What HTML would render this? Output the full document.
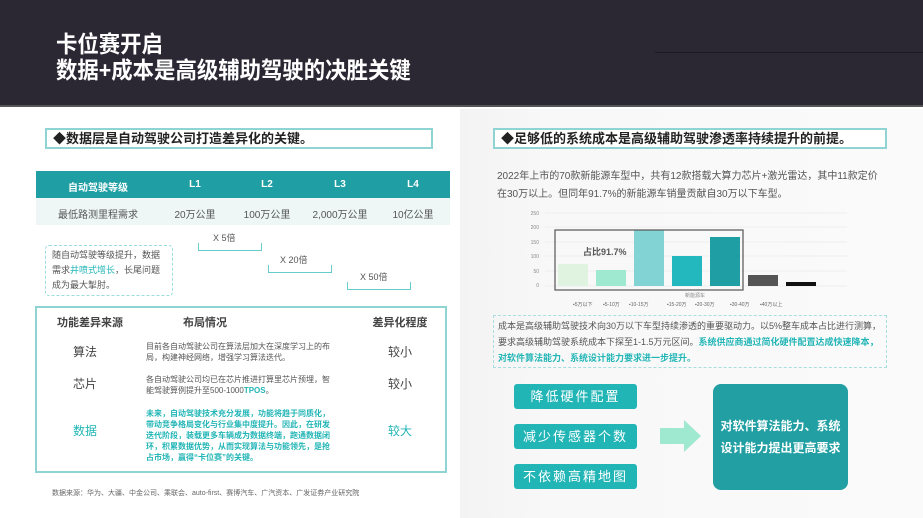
<!DOCTYPE html><html><head><meta charset="utf-8"><style>
*{margin:0;padding:0;box-sizing:border-box}
body{width:923px;height:518px;overflow:hidden;background:#fff;font-family:"Liberation Sans","Noto Sans CJK SC",sans-serif;position:relative;color:#555}
.a{position:absolute}
.hdr{left:0;top:0;width:923px;height:107px;background:#2b2833;border-bottom:2px solid #555}
.t{color:#fff;font-weight:bold;font-size:23px;left:56px;line-height:26px;transform:scaleX(0.93);transform-origin:left}
.rb{left:460px;top:109px;width:463px;height:409px;background:linear-gradient(90deg,#f3f3f3,#f8f8f8 20%,#fafafa)}
.tt{border:2px solid #8fd3d3;background:#fff;font-weight:bold;font-size:13px;color:#222;padding-left:6px;line-height:17px}
.c{text-align:center}
.btn{left:514px;width:123px;height:25px;background:#22b5b6;color:#fff;font-size:13px;letter-spacing:2px;text-align:center;line-height:25px;border-radius:3px}
.br{border:1px solid #6cc;border-top:none;height:8px}
.tl{color:#22b5b6}
</style></head><body>
<div class="a hdr"></div>
<div class="a" style="left:655px;top:52px;width:268px;height:1px;background:#1a1820"></div>
<div class="a t" style="top:31px">卡位赛开启</div>
<div class="a t" style="top:57px">数据+成本是高级辅助驾驶的决胜关键</div>
<div class="a rb"></div>

<div class="a tt" style="left:45px;top:128px;width:388px;height:21px">◆数据层是自动驾驶公司打造差异化的关键。</div>
<div class="a" style="left:36px;top:171px;width:414px;height:27px;background:#1f9ea3"></div>
<div class="a" style="left:36px;top:198px;width:414px;height:27px;background:#eef7f6"></div>
<div class="a c" style="left:36px;top:179px;width:124px;font-size:10px;color:#fff;font-weight:bold">自动驾驶等级</div>
<div class="a c" style="left:165px;top:179px;width:60px;font-size:10px;color:#fff;font-weight:bold">L1</div>
<div class="a c" style="left:237px;top:179px;width:60px;font-size:10px;color:#fff;font-weight:bold">L2</div>
<div class="a c" style="left:310px;top:179px;width:60px;font-size:10px;color:#fff;font-weight:bold">L3</div>
<div class="a c" style="left:383px;top:179px;width:60px;font-size:10px;color:#fff;font-weight:bold">L4</div>
<div class="a c" style="left:36px;top:206px;width:124px;font-size:10px">最低路测里程需求</div>
<div class="a c" style="left:155px;top:206px;width:80px;font-size:10px">20万公里</div>
<div class="a c" style="left:227px;top:206px;width:80px;font-size:10px">100万公里</div>
<div class="a c" style="left:300px;top:206px;width:80px;font-size:10px">2,000万公里</div>
<div class="a c" style="left:373px;top:206px;width:80px;font-size:10px">10亿公里</div>
<div class="a" style="left:213px;top:231px;font-size:9px">X 5倍</div>
<div class="a br" style="left:198px;top:243px;width:64px"></div>
<div class="a" style="left:280px;top:253px;font-size:9px">X 20倍</div>
<div class="a br" style="left:268px;top:265px;width:64px"></div>
<div class="a" style="left:360px;top:270px;font-size:9px">X 50倍</div>
<div class="a br" style="left:347px;top:282px;width:64px"></div>
<div class="a" style="left:45px;top:245px;width:128px;height:51px;border:1px dashed #9dd;border-radius:4px;font-size:9px;line-height:15px;padding:2px 6px;color:#555">随自动驾驶等级提升，数据需求<span class="tl">井喷式增长</span>，长尾问题成为最大掣肘。</div>

<div class="a" style="left:35px;top:306px;width:412px;height:167px;border:2px solid #8fd3d3"></div>
<div class="a c" style="left:45px;top:314px;width:90px;font-size:11px;font-weight:bold;color:#444">功能差异来源</div>
<div class="a c" style="left:170px;top:314px;width:70px;font-size:11px;font-weight:bold;color:#444">布局情况</div>
<div class="a c" style="left:355px;top:314px;width:90px;font-size:11px;font-weight:bold;color:#444">差异化程度</div>
<div class="a c" style="left:60px;top:343px;width:50px;font-size:12px;color:#444">算法</div>
<div class="a c" style="left:60px;top:375px;width:50px;font-size:12px;color:#444">芯片</div>
<div class="a c tl" style="left:60px;top:422px;width:50px;font-size:12px">数据</div>
<div class="a c" style="left:375px;top:343px;width:50px;font-size:12px;color:#444">较小</div>
<div class="a c" style="left:375px;top:375px;width:50px;font-size:12px;color:#444">较小</div>
<div class="a c tl" style="left:375px;top:422px;width:50px;font-size:12px">较大</div>
<div class="a" style="left:146px;top:341px;width:190px;font-size:8px;line-height:11px">目前各自动驾驶公司在算法层加大在深度学习上的布局，构建神经网络，增强学习算法迭代。</div>
<div class="a" style="left:146px;top:374px;width:190px;font-size:8px;line-height:11px">各自动驾驶公司均已在芯片推进打算里芯片预埋，智能驾驶算例提升至500-1000<b class="tl">TPOS</b>。</div>
<div class="a tl" style="left:146px;top:408px;width:190px;font-size:8px;line-height:11px;font-weight:bold">未来，自动驾驶技术充分发展，功能将趋于同质化，带动竞争格局变化与行业集中度提升。因此，在研发迭代阶段，装载更多车辆成为数据终端，跑通数据闭环，积累数据优势，从而实现算法与功能领先，是抢占市场，赢得“卡位赛”的关键。</div>
<div class="a" style="left:52px;top:488px;font-size:7px;color:#666">数据来源：华为、大疆、中金公司、乘联会、auto-first、赛博汽车、广汽资本、广发证券产业研究院</div>

<div class="a tt" style="left:493px;top:128px;width:394px;height:21px">◆足够低的系统成本是高级辅助驾驶渗透率持续提升的前提。</div>
<div class="a" style="left:497px;top:168px;width:390px;font-size:10px;line-height:18px;color:#555">2022年上市的70款新能源车型中，共有12款搭载大算力芯片+激光雷达，其中11款定价在30万以上。但同年91.7%的新能源车销量贡献自30万以下车型。</div>
<svg class="a" style="left:525px;top:205px" width="330" height="105">
<g font-size="5" fill="#888" text-anchor="end" font-family="Liberation Sans">
<text x="14" y="10">250</text><text x="14" y="24">200</text><text x="14" y="39">150</text><text x="14" y="53">100</text><text x="14" y="68">50</text><text x="14" y="82">0</text></g>
<g stroke="#eee" stroke-width="1"><line x1="20" y1="8" x2="322" y2="8"/><line x1="20" y1="22" x2="322" y2="22"/><line x1="20" y1="37" x2="322" y2="37"/><line x1="20" y1="51" x2="322" y2="51"/><line x1="20" y1="66" x2="322" y2="66"/><line x1="20" y1="81" x2="322" y2="81"/></g>
<rect x="33" y="59" width="30" height="22" fill="#e0f3e0"/>
<rect x="71" y="65" width="30" height="16" fill="#9ee9cf"/>
<rect x="109" y="25" width="30" height="56" fill="#82d3d4"/>
<rect x="147" y="51" width="30" height="30" fill="#22b8bd"/>
<rect x="185" y="32" width="30" height="49" fill="#1f9ea3"/>
<rect x="223" y="70" width="30" height="11" fill="#555"/>
<rect x="261" y="77" width="30" height="4" fill="#111"/>
<rect x="30" y="25" width="188" height="60" fill="none" stroke="#555" stroke-width="1.2"/>
<text x="58" y="50" font-size="9" font-weight="bold" fill="#555" font-family="Liberation Sans,Noto Sans CJK SC">占比91.7%</text>
<text x="170" y="92" font-size="5" fill="#888" text-anchor="middle" font-family="Noto Sans CJK SC">新能源车</text>
<g font-size="5" fill="#666" font-family="Liberation Sans,Noto Sans CJK SC"><text x="48" y="101">▪5万以下</text><text x="78" y="101">▪5-10万</text><text x="104" y="101">▪10-15万</text><text x="142" y="101">▪15-20万</text><text x="170" y="101">▪20-30万</text><text x="205" y="101">▪30-40万</text><text x="235" y="101">▪40万以上</text></g>
</svg>
<div class="a" style="left:493px;top:315px;width:394px;height:53px;border:1px dashed #a8dede;font-size:9px;line-height:16px;padding:2px 4px;color:#555">成本是高级辅助驾驶技术向30万以下车型持续渗透的重要驱动力。以5%整车成本占比进行测算，要求高级辅助驾驶系统成本下探至1-1.5万元区间。<b class="tl">系统供应商通过简化硬件配置达成快速降本，对软件算法能力、系统设计能力要求进一步提升。</b></div>
<div class="a btn" style="top:384px">降低硬件配置</div>
<div class="a btn" style="top:424px">减少传感器个数</div>
<div class="a btn" style="top:464px">不依赖高精地图</div>
<svg class="a" style="left:660px;top:420px" width="42" height="32"><polygon points="0,8 24,8 24,0 41,16 24,32 24,24 0,24" fill="#9ee9cf"/></svg>
<div class="a" style="left:713px;top:384px;width:135px;height:106px;background:#219fa3;border-radius:8px;color:#fff;font-size:12px;font-weight:bold;text-align:center;line-height:22px;padding-top:31px">对软件算法能力、系统<br>设计能力提出更高要求</div>
</body></html>
